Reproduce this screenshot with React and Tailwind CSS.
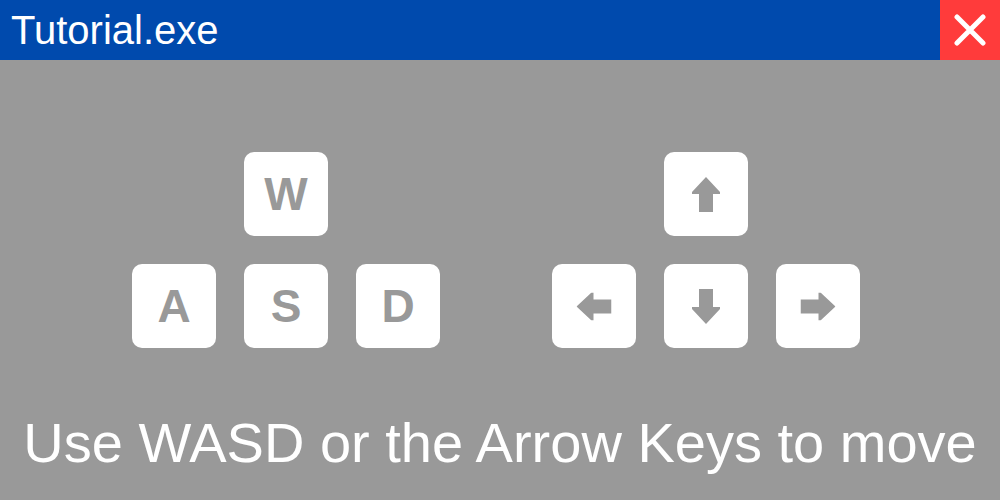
import React from 'react';

const font = { fontFamily: '"Liberation Sans", Arial, sans-serif' };

function Key({ children }) {
  return (
    <div className="w-[84px] h-[84px] rounded-[10px] bg-white flex items-center justify-center text-[46px] font-bold leading-none text-[#999999]">
      {children}
    </div>
  );
}

// arrow drawn pointing up, rotated for the others
function Arrow({ rotate = 0 }) {
  return (
    <svg width="28" height="35" viewBox="0 0 28 35" style={{ transform: `rotate(${rotate}deg)` }}>
      <polygon points="14,0 28,15 28,17 21,17 21,35 7,35 7,17 0,17 0,15" fill="#999999" />
    </svg>
  );
}

export default function App() {
  return (
    <div className="w-[1000px] h-[500px] flex flex-col bg-[#999999] overflow-hidden" style={font}>
      <div className="h-[60px] flex items-center bg-[#004aad] shrink-0">
        <div className="flex-1 pl-[11px] text-[40px] leading-[60px] text-white">Tutorial.exe</div>
        <button className="w-[60px] h-[60px] bg-[#ff3b3b] flex items-center justify-center">
          <svg width="32" height="32" viewBox="0 0 32 32">
            <path d="M3 3 L29 29 M29 3 L3 29" stroke="white" strokeWidth="5" strokeLinecap="round" />
          </svg>
        </button>
      </div>

      <div className="flex pl-[132px] pt-[92px] gap-[112px]">
        <div className="grid grid-cols-[84px_84px_84px] gap-[28px]">
          <div />
          <Key>W</Key>
          <div />
          <Key>A</Key>
          <Key>S</Key>
          <Key>D</Key>
        </div>
        <div className="grid grid-cols-[84px_84px_84px] gap-[28px]">
          <div />
          <Key><Arrow /></Key>
          <div />
          <Key><Arrow rotate={-90} /></Key>
          <Key><Arrow rotate={180} /></Key>
          <Key><Arrow rotate={90} /></Key>
        </div>
      </div>

      <div className="mt-[67px] text-center text-[56px] leading-none text-white">
        Use WASD or the Arrow Keys to move
      </div>
    </div>
  );
}
